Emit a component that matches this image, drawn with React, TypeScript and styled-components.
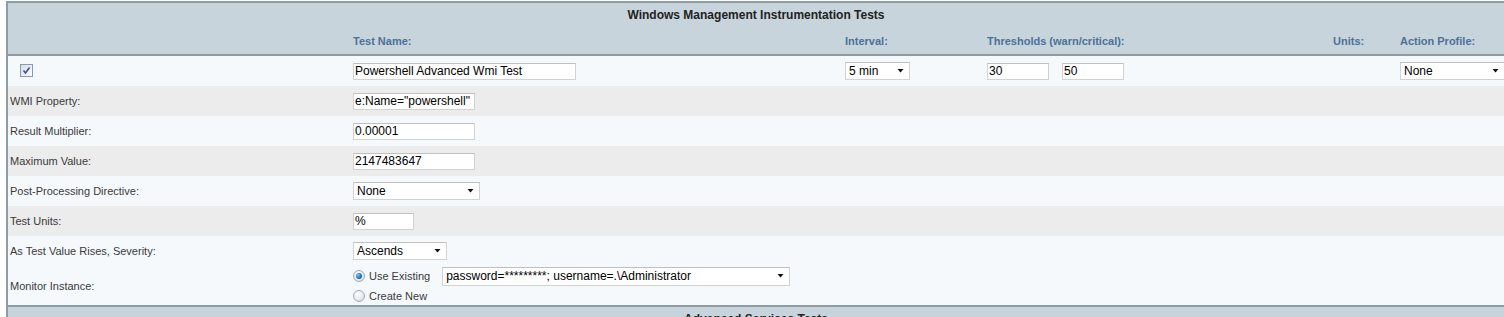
import * as React from "react";
import styled, { createGlobalStyle } from "styled-components";

const GlobalStyle = createGlobalStyle`
  html, body {
    margin: 0;
    padding: 0;
    background: #ffffff;
    overflow: hidden;
  }
  body {
    font-family: "Liberation Sans", Arial, sans-serif;
  }
`;

const COLS = "345px 492px 142px 346px 67px 1fr";

const Page = styled.div`
  width: 1504px;
  padding: 1px 0 0 6px;
  box-sizing: border-box;
`;

const Panel = styled.div`
  border-top: 2px solid #8e9ca4;
  border-left: 2px solid #8e9ca4;
`;

const HeaderBand = styled.div`
  background: #c7d4dc;
  border-bottom: 2px solid #8e9ca4;
`;

const Title = styled.div`
  height: 25px;
  line-height: 25px;
  text-align: center;
  font-size: 12px;
  font-weight: bold;
  color: #222222;
`;

const ColumnHeads = styled.div`
  display: grid;
  grid-template-columns: ${COLS};
  height: 26px;
  align-items: center;
`;

const ColHead = styled.div`
  font-size: 11px;
  font-weight: bold;
  color: #4c7199;
  white-space: nowrap;
`;

const TestRow = styled.div`
  display: grid;
  grid-template-columns: ${COLS};
  height: 30px;
  align-items: center;
  background: #f5f9fc;
`;

const DetailRow = styled.div<{ $shade?: boolean; $tall?: boolean }>`
  display: grid;
  grid-template-columns: 345px 1fr;
  height: ${(p) => (p.$tall ? "39px" : "30px")};
  align-items: center;
  background: ${(p) => (p.$shade ? "#ececec" : "#f5f9fc")};
`;

const Label = styled.div`
  padding-left: 2px;
  font-size: 11px;
  color: #3a3a3a;
`;

const CheckCell = styled.div`
  padding: 0 0 2px 12px;
`;

const Checkbox = styled.span`
  display: block;
  width: 13px;
  height: 13px;
  box-sizing: border-box;
  border: 1px solid #8a98b6;
  background: linear-gradient(135deg, #d6dbe8 0%, #eef0f6 60%, #ffffff 100%);
  svg {
    display: block;
  }
`;

const TextField = styled.input<{ $w: number }>`
  display: block;
  width: ${(p) => p.$w}px;
  height: 17px;
  box-sizing: border-box;
  margin: 0;
  padding: 0 0 0 1px;
  border: 1px solid #d2d2d2;
  border-top-color: #c0c0c0;
  background: #ffffff;
  font-family: "Liberation Sans", Arial, sans-serif;
  font-size: 12px;
  color: #000000;
  outline: none;
`;

const SelectBox = styled.div<{ $w: number; $h?: number }>`
  display: flex;
  align-items: center;
  justify-content: space-between;
  width: ${(p) => p.$w}px;
  height: ${(p) => p.$h ?? 18}px;
  box-sizing: border-box;
  padding: 0 5px 0 3px;
  border: 1px solid #d2d2d2;
  border-top-color: #c0c0c0;
  background: #ffffff;
  font-size: 12px;
  color: #000000;
  white-space: nowrap;
`;

const Pair = styled.div`
  display: flex;
  gap: 13px;
`;

const MonitorBox = styled.div`
  display: flex;
  flex-direction: column;
  gap: 2px;
  padding-top: 1px;
`;

const RadioLine = styled.div`
  display: flex;
  align-items: center;
  font-size: 11px;
  color: #3a3a3a;
  height: 18px;
`;

const RadioText = styled.span<{ $gap?: number }>`
  margin-left: 4px;
  margin-right: ${(p) => p.$gap ?? 0}px;
`;

const Radio = styled.span<{ $checked?: boolean }>`
  position: relative;
  width: 12px;
  height: 12px;
  box-sizing: border-box;
  border-radius: 50%;
  border: 1px solid #a3acb8;
  background: radial-gradient(circle at 40% 35%, #ffffff 0%, #e4e8ee 60%, #c9d0d9 100%);
  &::after {
    content: "";
    display: ${(p) => (p.$checked ? "block" : "none")};
    position: absolute;
    left: 2px;
    top: 2px;
    width: 6px;
    height: 6px;
    border-radius: 50%;
    background: radial-gradient(circle at 35% 35%, #7fc2ef 0%, #1f6db3 60%, #0d3f7a 100%);
  }
`;

const NextBand = styled.div`
  border-top: 2px solid #8e9ca4;
  background: #c7d4dc;
  height: 30px;
`;

function Arrow() {
  return (
    <svg width="7" height="4" viewBox="0 0 7 4">
      <path d="M0.5 0H6.5L3.5 3.5Z" fill="#111111" />
    </svg>
  );
}

function Select({ w, h, children }: { w: number; h?: number; children: React.ReactNode }) {
  return (
    <SelectBox $w={w} $h={h}>
      <span>{children}</span>
      <Arrow />
    </SelectBox>
  );
}

export default function App() {
  return (
    <>
      <GlobalStyle />
      <Page>
        <Panel>
          <HeaderBand>
            <Title>Windows Management Instrumentation Tests</Title>
            <ColumnHeads>
              <span />
              <ColHead>Test Name:</ColHead>
              <ColHead>Interval:</ColHead>
              <ColHead>Thresholds (warn/critical):</ColHead>
              <ColHead>Units:</ColHead>
              <ColHead>Action Profile:</ColHead>
            </ColumnHeads>
          </HeaderBand>

          <TestRow>
            <CheckCell>
              <Checkbox>
                <svg width="11" height="11" viewBox="0 0 11 11">
                  <path d="M2.5 5.5L4.5 8L8.5 2.5" stroke="#3d4f86" strokeWidth="1.6" fill="none" />
                </svg>
              </Checkbox>
            </CheckCell>
            <TextField $w={223} readOnly value="Powershell Advanced Wmi Test" />
            <Select w={65}>5 min</Select>
            <Pair>
              <TextField $w={62} readOnly value="30" />
              <TextField $w={62} readOnly value="50" />
            </Pair>
            <span />
            <Select w={105}>None</Select>
          </TestRow>

          <DetailRow $shade>
            <Label>WMI Property:</Label>
            <TextField $w={122} readOnly value={'e:Name="powershell"'} />
          </DetailRow>
          <DetailRow>
            <Label>Result Multiplier:</Label>
            <TextField $w={122} readOnly value="0.00001" />
          </DetailRow>
          <DetailRow $shade>
            <Label>Maximum Value:</Label>
            <TextField $w={122} readOnly value="2147483647" />
          </DetailRow>
          <DetailRow>
            <Label>Post-Processing Directive:</Label>
            <Select w={127}>None</Select>
          </DetailRow>
          <DetailRow $shade>
            <Label>Test Units:</Label>
            <TextField $w={61} readOnly value="%" />
          </DetailRow>
          <DetailRow>
            <Label>As Test Value Rises, Severity:</Label>
            <Select w={94}>Ascends</Select>
          </DetailRow>
          <DetailRow $tall>
            <Label>Monitor Instance:</Label>
            <MonitorBox>
              <RadioLine>
                <Radio $checked />
                <RadioText $gap={12}>Use Existing</RadioText>
                <Select w={348} h={19}>password=*********; username=.\Administrator</Select>
              </RadioLine>
              <RadioLine>
                <Radio />
                <RadioText>Create New</RadioText>
              </RadioLine>
            </MonitorBox>
          </DetailRow>

          <NextBand>
            <Title>Advanced Services Tests</Title>
          </NextBand>
        </Panel>
      </Page>
    </>
  );
}
